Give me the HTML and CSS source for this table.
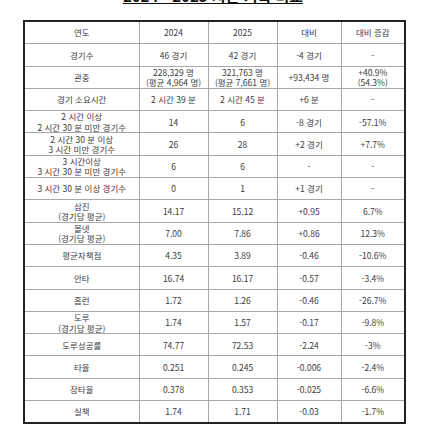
FILE: index.html
```html
<!DOCTYPE html>
<html lang="ko">
<head>
<meta charset="utf-8">
<link rel="stylesheet" href="styles.css">
</head>
<body>
<div class="title"><span class="title-text">2024 - 2025 시즌 기록 비교</span></div>
<table class="stats">
<colgroup><col class="c1"><col class="c2"><col class="c3"><col class="c4"><col class="c5"></colgroup>
<tbody>
<tr><td>연도</td><td>2024</td><td>2025</td><td>대비</td><td>대비 증감</td></tr>
<tr><td>경기수</td><td>46 경기</td><td>42 경기</td><td>-4 경기</td><td>-</td></tr>
<tr><td>관중</td><td>228,329 명<br>(평균 4,964 명)</td><td>321,763 명<br>(평균 7,661 명)</td><td>+93,434 명</td><td>+40.9%<br>(54.3%)</td></tr>
<tr><td>경기 소요시간</td><td>2 시간 39 분</td><td>2 시간 45 분</td><td>+6 분</td><td>-</td></tr>
<tr><td>2 시간 이상<br>2 시간 30 분 미만 경기수</td><td>14</td><td>6</td><td>-8 경기</td><td>-57.1%</td></tr>
<tr><td>2 시간 30 분 이상<br>3 시간 미만 경기수</td><td>26</td><td>28</td><td>+2 경기</td><td>+7.7%</td></tr>
<tr><td>3 시간이상<br>3 시간 30 분 미만 경기수</td><td>6</td><td>6</td><td>-</td><td>-</td></tr>
<tr><td>3 시간 30 분 이상 경기수</td><td>0</td><td>1</td><td>+1 경기</td><td>-</td></tr>
<tr><td>삼진<br>(경기당 평균)</td><td>14.17</td><td>15.12</td><td>+0.95</td><td>6.7%</td></tr>
<tr><td>볼넷<br>(경기당 평균)</td><td>7.00</td><td>7.86</td><td>+0.86</td><td>12.3%</td></tr>
<tr><td>평균자책점</td><td>4.35</td><td>3.89</td><td>-0.46</td><td>-10.6%</td></tr>
<tr><td>안타</td><td>16.74</td><td>16.17</td><td>-0.57</td><td>-3.4%</td></tr>
<tr><td>홈런</td><td>1.72</td><td>1.26</td><td>-0.46</td><td>-26.7%</td></tr>
<tr><td>도루<br>(경기당 평균)</td><td>1.74</td><td>1.57</td><td>-0.17</td><td>-9.8%</td></tr>
<tr><td>도루성공률</td><td>74.77</td><td>72.53</td><td>-2.24</td><td>-3%</td></tr>
<tr><td>타율</td><td>0.251</td><td>0.245</td><td>-0.006</td><td>-2.4%</td></tr>
<tr><td>장타율</td><td>0.378</td><td>0.353</td><td>-0.025</td><td>-6.6%</td></tr>
<tr><td>실책</td><td>1.74</td><td>1.71</td><td>-0.03</td><td>-1.7%</td></tr>
</tbody>
</table>
</body>
</html>
```

FILE: styles.css
```css
html, body {
  margin: 0;
  padding: 0;
  background: #ffffff;
}
body {
  font-family: "Noto Sans CJK KR", "Noto Sans", sans-serif;
  color: #3c3c3c;
  width: 426px;
  height: 426px;
  overflow: hidden;
}
.title {
  height: 20px;
  padding-top: 1px;
  box-sizing: border-box;
  text-align: center;
}
.title-text {
  display: block;
  margin-top: -13px;
  font-size: 15px;
  line-height: 16px;
  font-weight: 700;
  color: #111;
  text-decoration: underline;
  text-decoration-thickness: 1px;
  text-underline-offset: 1px;
}
.stats {
  margin-left: 23px;
  width: 381px;
  table-layout: fixed;
  border-collapse: collapse;
  border: 2px solid #222;
}
.c1 { width: 115px; }
.c2 { width: 69px; }
.c3 { width: 69px; }
.c4 { width: 64px; }
.c5 { width: 64px; }
.stats td {
  border: 1px solid #a8a8a8;
  height: 21.3px;
  padding: 0;
  text-align: center;
  vertical-align: middle;
  font-size: 8.5px;
  line-height: 10.5px;
  white-space: nowrap;
}
```
